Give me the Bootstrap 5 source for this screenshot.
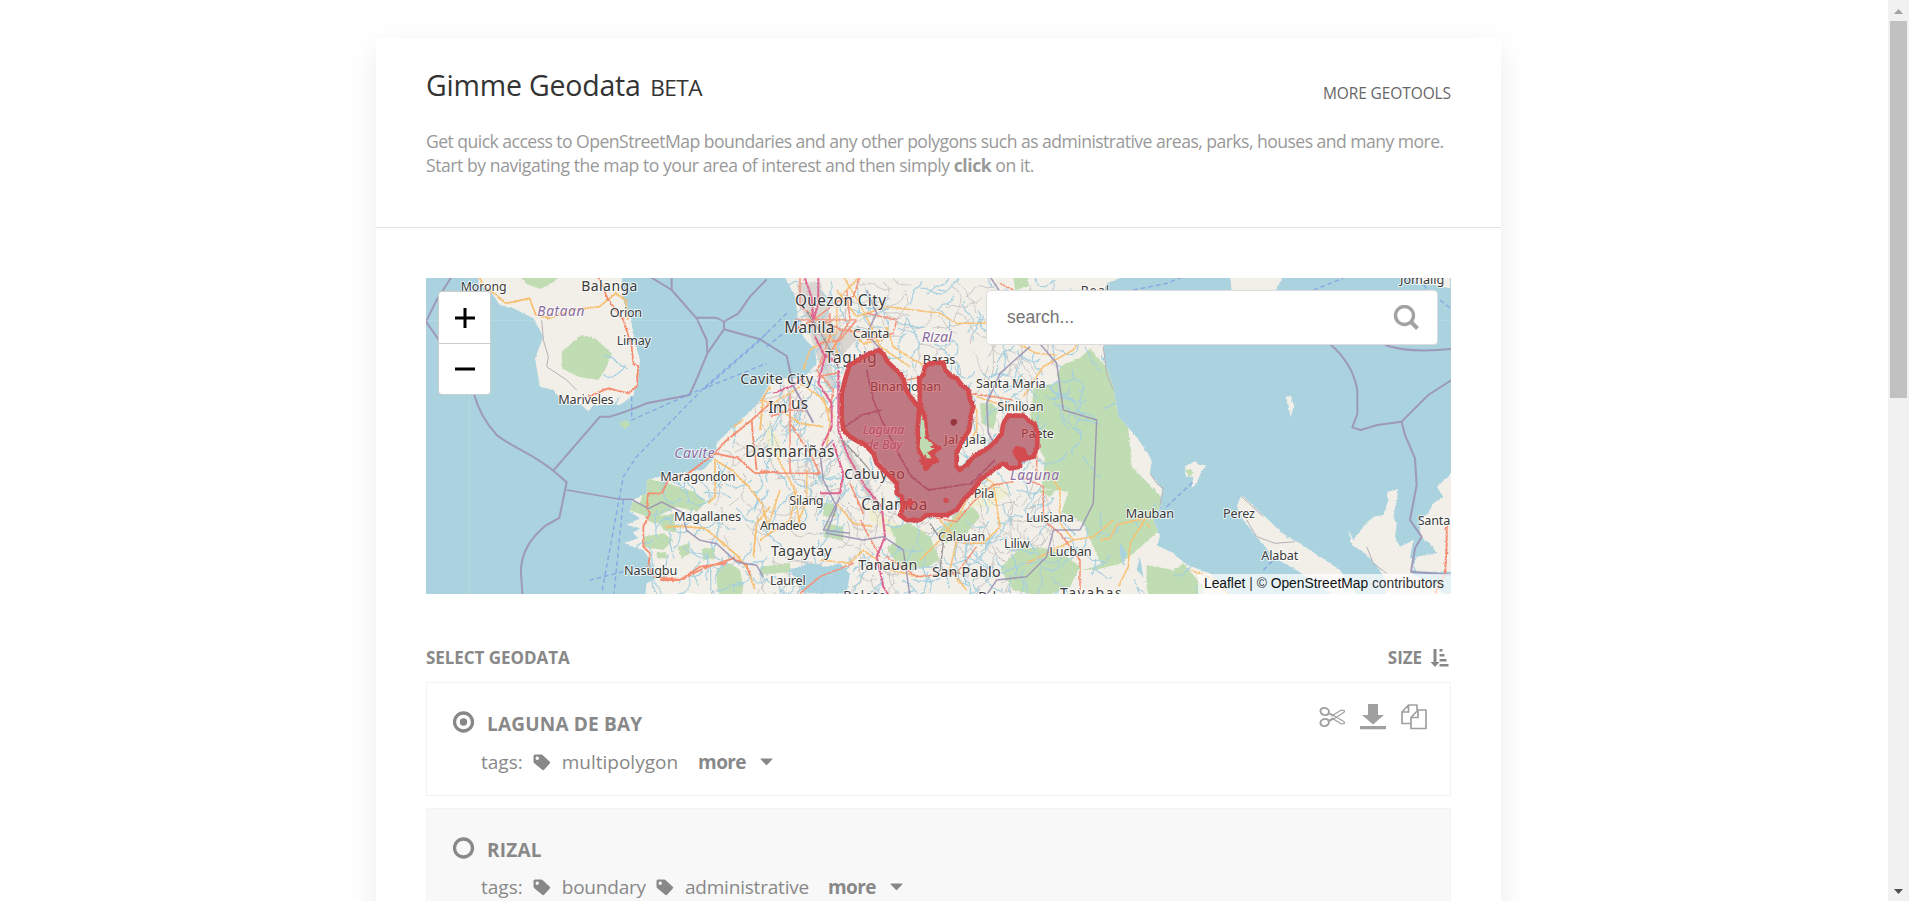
<!DOCTYPE html>
<html lang="en">
<head>
<meta charset="utf-8">
<title>Gimme Geodata</title>
<link href="https://cdn.jsdelivr.net/npm/bootstrap@5.3.0/dist/css/bootstrap.min.css" rel="stylesheet">
<script src="https://cdn.jsdelivr.net/npm/bootstrap@5.3.0/dist/js/bootstrap.bundle.min.js"></script>
<style>
body{height:901px;overflow:hidden;background:#fff;font-family:"Open Sans","Noto Sans",sans-serif;color:#888}
.page-col{height:901px;overflow:hidden;padding:38px 387px 0 376px}
.sheet{width:1125px;height:1000px;background:#fff;box-shadow:0 10px 30px rgba(0,0,0,.08)}
.head{height:190px;padding:0 50px;border-bottom:1px solid #e0e2e3}
.title{color:#333;font-size:28.5px;line-height:40px;padding-top:27px;font-weight:400;letter-spacing:-.2px}
.title .beta{font-size:22.6px;margin-left:9.500px;letter-spacing:-.5px}
.tools{color:#666;font-size:15.5px;line-height:20px;padding-top:45px;letter-spacing:-.1px}
.intro{color:#999;font-size:17.6px;line-height:24.300px;margin-top:21px;white-space:nowrap;letter-spacing:-.545px}
.intro .second{letter-spacing:-.45px}
.main-pad{padding:0 50px}
.map{height:316px;margin-top:50px;background:#aad3df}
.map>svg{display:block}
.zoomer{left:12px;top:13px;width:53px;height:104px;border:1px solid #ccc;border-radius:4px;background:#fff}
.zoomer div{height:51px}
.zoomer div+div{border-top:1px solid #ccc}
.finder{left:560px;top:12px;width:452px;height:55px;background:#fff;border:1px solid #dcdcdc;border-radius:4px;font:17.500px "Liberation Sans",sans-serif;color:#757575;padding:0 18px 0 20px}
.attrib{right:0;bottom:0;height:20px;background:rgba(255,255,255,.7);font:13.8px/19px "Liberation Sans",sans-serif;color:#333;padding:0 7px 0 6px;white-space:nowrap}
.attrib b{font-weight:400;color:#111}
.bar{height:24px;margin-top:52px;font-size:17px;font-weight:700;line-height:24px;letter-spacing:-.05px}
.geo{height:114px;border:1px solid #f3f3f3;background:#fff;margin-bottom:12px;padding:28px 23px 0 26px}
.bar+.geo{margin-top:12px}
.geo.off{background:#f8f8f8}
.geo h2{font-size:19px;font-weight:700;line-height:26px;margin:0 0 0 12px;letter-spacing:.2px}
.tags{font-size:19px;line-height:26px;margin:12px 0 0 28px}
.off .tags{margin-top:11px}
.tags b{font-weight:700;letter-spacing:-.6px}
.tight{letter-spacing:-.2px}
svg{flex:none}
.acts{margin-top:-7px}
.sb{right:0;top:0;width:21px;height:901px;background:#f1f1f1}
.sb i{display:block;width:17px;height:377px;background:#c1c1c1;margin:0 auto}
.place{font-family:"Noto Sans","Open Sans",sans-serif;fill:#3a3a3a;stroke:#fff;stroke-opacity:.75;stroke-width:6px;paint-order:stroke;stroke-linejoin:round}
.place .prov{fill:#8a6a9c;font-style:italic}
</style>
</head>
<body>
<svg width="0" height="0" class="position-absolute">
<symbol id="tag" viewBox="0 0 18 17"><path fill="#888" fill-rule="evenodd" d="M.5 2Q.5.5 2 .5h6.2q.9 0 1.6.7l7 6.5q.9.9 0 1.8l-5.700 6.300q-.9.9-1.900 0L1.300 9.300Q.5 8.500.5 7.600ZM4.200 2.500a1.700 1.700 0 1 0 .1 0Z"/></symbol>
<symbol id="caret" viewBox="0 0 13 8"><path fill="#888" d="M1 .5h11q.8.300.2 1L7.200 6.700q-.7.600-1.400 0L.8 1.500Q.2.800 1 .5Z"/></symbol>
</svg>
<div class="page-col">
<main class="sheet">
<header class="head">
<div class="d-flex justify-content-between"><h1 class="title m-0"><span>Gimme Geodata</span><span class="beta">BETA</span></h1><div class="tools">MORE GEOTOOLS</div></div>
<p class="intro mb-0">Get quick access to OpenStreetMap boundaries and any other polygons such as administrative areas, parks, houses and many more.<br><span class="second">Start by navigating the map to your area of interest and then simply <b>click</b> on it.</span></p>
</header>
<div class="main-pad">
<div class="map position-relative">
<svg width="1025" height="316" viewBox="426 278 1025 316">
<defs>
<filter id="rough" x="-5%" y="-5%" width="110%" height="110%"><feTurbulence type="fractalNoise" baseFrequency=".11" numOctaves="3" seed="4"/><feDisplacementMap in="SourceGraphic" scale="8" xChannelSelector="R" yChannelSelector="G"/></filter>
<filter id="edge" x="-5%" y="-5%" width="110%" height="110%"><feTurbulence type="fractalNoise" baseFrequency=".13" numOctaves="2" seed="9"/><feDisplacementMap in="SourceGraphic" scale="8" xChannelSelector="R" yChannelSelector="G"/></filter>
<clipPath id="land"><path d="M175 20V42L215 70 240 105 280 115 340 145 370 200 345 265 360 350 400 360 430 395 480 400 505 425 520 405 600 405 640 375 655 330 660 270 645 220 635 160 610 90 605 20ZM1095 20L1125 80 1135 150 1150 200 1185 240 1190 280 1150 325 1080 325 1050 340 1020 390 985 430 940 470 890 520 885 560 850 600 800 605 740 615 680 630 680 670 640 690 630 725 660 745 620 765 660 775 640 790 655 805 610 820 670 840 690 870 700 900 720 920 680 940 675 980H2430L2370 910 2300 885 2260 850 2210 825 2220 800 2200 750 2220 710 2228 660 2190 610 2195 570 2150 500 2095 440 2080 350 2055 280 2050 220 2020 150 2060 40 2110 20Z"/></clipPath>
</defs>
<g transform="translate(420 270) scale(.33333)">
<g filter="url(#rough)">
<g clip-path="url(#land)"><path fill="#f2efe9" d="M0 0h3200v1000H0z"/>
<path fill="#d9d5d1" d="M1130 40l70-5 30 100 20 80-20 60 20 80-30 0-60-200-20-60ZM1230 190l60-20 20 40-60 60ZM1250 500l40 40 60 100 30 90-40-50-60-110Z"/>
<path fill="#f0eed0" d="M1340 700l80 60 90 20 30 40-100-10-90-60ZM1660 650l80-10 30 30-60 40-60 0ZM1040 450l40 60 0 60-40-30Z"/>
<g id="lanes" fill="none" stroke="#c4c0c0" stroke-width="2.500"></g>
<g fill="#c0dcb3">
<path d="M300 20l20 22 40 15 40-20 20-17ZM425 245l60-50 40 10 50 45-20 50-20 30-60-10-50-25ZM680 625l80 20 60 20 40 30-30 30-60-15-50 25 20 30-50-10-20-20-60-20-10-30 60 15ZM670 800l60-10 30 20-30 30-60-10ZM775 830l30-10 5 30-25 15ZM845 835l40 0 0 30-35 5ZM890 900l40-20 30 20 10 50-10 30h-60l-10-40ZM710 850l30-5 0 20-30 0ZM710 740l50-10 10 60-40-10Z"/>
<g transform="translate(1020 0)"><path d="M760 20l5 40 40-10 0-30ZM660 400l35 0 20 20-15 60-35-20ZM990 235l-30 30-55 20-15 30 10 20-80 20-5 70-10 60 50 80-10 90 80 10-20 60 60 30 60 130-60 15 40 0 80-20 80-70 60-50-20-80-90-90-20-230ZM390 770l60-10 60 40 30 70-40 20-80 5-40-60 30-20ZM530 790l60-60 50-20 20 30-40 50-60 30ZM720 895l60-60 80 0 60 25 40 30-30 60-80 30-90-20ZM200 760l50 10 0 40-60-10ZM0 890l90-10 0 25-90 10ZM830 660l60 0-20 20ZM190 700l30 0 10 40-40 0Z"/><path d="M1160 885l80 15 30-20 60 70v50h-160l-10-50Z"/></g>
</g>
<path fill="#aad3df" d="M1110 900l60-20 50 10 40-10 30 30-10 60H1150ZM2100 820l20 30-10 40-10-40ZM2160 860l10 60-20-20Z"/>
<g id="streams" fill="none" stroke="#a5d0df" stroke-width="3.500"></g>
</g>
<g transform="translate(2040 0)" fill="#f2efe9"><path d="M390 20l5 42h130l25-42ZM940 20l10 25 30-5 70 15V20ZM557 380l14-2 12 30-12 34-5-34ZM253 590l32-17 12 12 22 0-17 25-12 30-15 14 5-34-22 0ZM425 675l70 65 65 60 40 20 90 60 30 20 50 75h-70l-60-45-120-70-50-60-40-50-20-40ZM745 780l15 30 30-40 30-30 30-5 15-45-3-25 33-7-5 32-10 50 10 20-5 40 15 30 40-20-10 50 20 45 130 0v80H860l-10-68-30-42-30-30-35-20ZM1070 590l-25 30-35 30 20 30-30 20-15 30-25 20 0 50 30 20 20 30-60 10-15 50 130 80Z"/><path fill="#c0dcb3" d="M257 600l14-4 8 12-12 12Z"/></g>
<path fill="#c0dcb3" d="M597 460l18-10 15 12-15 16Z"/>
<g fill="none" stroke="#f6be6d" stroke-width="5"><path d="M178 20l10 25 40 30 30 25 70-15 20 50 40 10 70-25 80-10 50-40 30 20 5 60"/><path d="M885 570l50 30 50 50 40 50 20 70M885 570l0 110-20 20M735 770l60 0 60 5 60 50 40 35 30 40 20 60M1020 480l10-100 20-30M1000 860l10-100 40-50M940 470l30-20"/></g>
<g transform="translate(1020 0)" fill="none" stroke="#f8c173" stroke-width="4.500"><path d="M120 340l60 40 40 60M120 350l-80 50-40-10M230 60l60 80 90-30 80 10 80 10 50 30 100 0 60 50 80 40 60 5M380 170l20 60 60 40 50 20M250 20l60 100 50 110 90 60M130 300l20-60 80-50 0-100 70-70M1040 60l-40 90-60 90-90 50-60 90M650 380l60 20 80 20M1010 60l50 10M620 380l30 40 0 60-30 50M640 600l60 40 20 130-50 50-60 0M540 750l50 60-20 90 50 60M860 600l40 60 0 100 40 50 60-10 60-50M180 870l90 10 40-40 80 60 90 20 120-10M40 540l60 110 20 120M0 810l90-60 20-90M230 700l50 60 60 10"/><path d="M1020 810l30-5 20-40 60-15 30-10-50 80-5 70-30 60M1160 760l10 15M1290 900l80 30 40 50M60 420l60 40 70 10M190 380l20 80-10 70M60 660l-30 90-30 30M140 600l0 90-30 80M270 180l40 40 60-10M150 160l70 50 20 60M800 880l60-30 80-40M480 870l60-60 60-80 30-60"/></g>
<g fill="none" stroke="#f58d70" stroke-width="5.500"><path d="M535 20l30 70 45 60 25 80 5 50 15 10-5 60-25 20-60-15-60 25"/><path d="M1050 400l-55 50-80 65-30 35 70 15 50 45 70-5M995 450l5 60 10 90M885 550l-80 60-60 20-20 40-40 0-5 40 10 20-20 40 0 60 20 20-5 40 15 30 80 10 60-40 80-10M720 930h60l70-35 90-30 40 20 10 30"/></g>
<g transform="translate(1020 0)" fill="none" stroke="#f49378" stroke-width="4.500"><path d="M105 150l80 0 60 30 60 5M120 20l0 90 60 40 110 0M260 60l10 90-60 100-40 50M300 20l-20 60-40 10M320 130l90 20-10 40-80 20M90 370l0 90 60 90 30 60-120 0-60-10M30 440l60-20 40 0M170 300l50 60-10 60M560 330l60 40 80 10 60 10M820 480l10 70 0 80M780 620l70 30 0 100 50 40 60 80 0 90M530 745l60 10 50-60 60-50 60-10M380 860l90 60 120-10 60-80M300 750l60 110M120 970l60-50 100-40M270 640l40 90M440 330l40-8M760 60l-40-20M630 640l20 40M90 370l0 90 0 150M100 180l60-30 80-60M180 220l60-10 50-60M210 130l0 70-30 80M170 320l60-10"/></g>
<path fill="none" stroke="#f58d70" stroke-width="6" d="M3080 770v60l-5 80-30 60"/>
</g>
<g filter="url(#edge)" fill="none" stroke="#df6591" stroke-width="6"><path d="M1155 24l20 60 5 70M1195 20l0 80-20 70M1255 300v180l30 80 50 90 50 60 10 90-25 60 20 90 30 50M1205 245l50 40M1200 670l60 0 10-60-30-90M1060 370l60-25 30-20M1185 200l30 60-20 80 40 60 0 70-30 60"/><path d="M1160 125l40 60 40 70 15 40M1265 510l50 50 50 60M1530 760l40 60-10 80 60 10" stroke="#9a9593" stroke-width="4"/></g>
<g fill="none" stroke="#9b92b3" stroke-width="6" stroke-linejoin="round" stroke-opacity=".9"><path d="M95 20L50 90 18 155 60 215M162 372Q180 440 230 495C280 535 330 545 400 602L540 440 570 440Q620 425 680 400L808 375Q830 330 862 250L912 178 912 155 955 130 990 80 1040 28M690 20l65 40 75 85 30 65 2 40M755 60V20M830 143h58l24 12M912 178l108 30 80 50 20 90 60 110M400 602l40 35-22 107-40 22Q300 830 303 910l5 70"/><path stroke-width="4.500" d="M440 660l160 28 35 0 50 28 40-20 60 30 15 55 40 30 50 10 60 55 60 10 20 35M1240 510l-40 40 10 80 40 80-30 80 110 20 60-10 60 40 20 140M1290 790l-80-10 50-100M1340 60l30 70-30 60 60 70M1710 20l40 60 100 130 60 70 20 140 100 30-10 250-40 80-80 0-20 80-60 60-90 10-40 60M1830 230l-90 80-40 90 5 90 30 50"/><path d="M2730 222q70 60 82 140v70l-15 40 25 8 50-15 73-10 80-80 70-45M2895 225q70 25 200 12M2945 455l10 40 30 70 5 80-20 105 35 50-20 35-12 70 130 10"/></g>
<g fill="none" stroke="#7f9be6" stroke-opacity=".8" stroke-width="4" stroke-dasharray="14 9"><path d="M635 380l0 70 180-80 225-90M1040 190L850 355 650 560 610 620 582 770 545 970M1100 130l-90 90-160 140M610 690L582 970M610 905l-100 25M1040 230l100-80M2240 710l80-75M2530 900l40-40M2140 60l100-20 50-20M2680 60l90-35M3060 90l50 40M3000 24l30 50"/></g>
<path fill="none" stroke="#b6b0b5" stroke-width="3" d="M365 150l5 60 15 50-5 30 60 40 30 30M2050 230l10 80 20 50M2190 610l20 30 20 15-10 50M2465 680l65 60M2480 750l30 50 55 20 60-5M2840 830l20 50 40 30"/>
<path stroke="#fff" stroke-opacity=".25" stroke-width="2" d="M18 151h3100M148 24v950"/>
<g transform="translate(1020 0)" filter="url(#edge)"><path fill="#aad3df" d="M268 285L305 262 358 240 415 305 430 325 455 385 480 400 478 325 495 290 550 278 575 320 605 345 640 410 628 480 590 550 600 600 640 560 725 490 745 437 790 437 832 490 820 560 780 590 730 580 640 660 590 720 480 750 420 735 410 640 340 550 250 480 245 370Z"/><path fill="#c0dcb3" d="M484 420l12 20 4 65 24 20 20 10-35 20 20 15-31 30-14-50Z"/>
<path fill="none" stroke="#8f6a9a" stroke-width="5" d="M320 300l20 90 25 60 60 120 30 50 50 40 130-20 70-70M255 470l50-35 60-15"/></g>
<g class="place" font-size="38">
<g><text x="122" y="62" textLength="138" font-size="37">Morong</text><text x="484" y="63" textLength="168" font-size="42">Balanga</text><text class="prov" x="352" y="137" textLength="141" font-size="41">Bataan</text><text x="569" y="142" textLength="97">Orion</text><text x="590" y="226" textLength="103">Limay</text><text x="415" y="403" textLength="166">Mariveles</text><text x="961" y="342" textLength="218" font-size="43">Cavite City</text><text class="prov" x="763" y="565" textLength="121" font-size="42">Cavite</text><text x="721" y="632" textLength="226">Maragondon</text><text x="762" y="754" textLength="201">Magallanes</text><text x="612" y="914" textLength="160">Nasugbu</text><text x="975" y="560" textLength="268" font-size="46">Dasmariñas</text><text x="795" y="999" textLength="80">Tuy</text></g>
<g transform="translate(1020 0)"><text x="105" y="109" textLength="273" font-size="46">Quezon City</text><text x="73" y="189" textLength="150" font-size="46">Manila</text><text x="278" y="203" textLength="110">Cainta</text><text class="prov" x="485" y="217" textLength="91" font-size="43">Rizal</text><text x="195" y="278" textLength="155" font-size="46">Taguig</text><text x="488" y="281" textLength="98">Baras</text><text x="25" y="429" textLength="57" font-size="46">Im</text><text x="93" y="416" textLength="51" font-size="46">us</text><text x="330" y="363" textLength="213">Binangonan</text><text x="648" y="355" textLength="209">Santa Maria</text><text x="712" y="424" textLength="139">Siniloan</text><text x="783" y="503" textLength="99">Paete</text><text x="553" y="523" textLength="126">Jalajala</text><text class="prov" x="308" y="492" textLength="125">Laguna</text><text class="prov" x="317" y="537" textLength="110">de Bay</text><text x="253" y="627" textLength="181" font-size="42">Cabuyao</text><text class="prov" x="750" y="631" textLength="147" font-size="41">Laguna</text><text x="88" y="705" textLength="103">Silang</text><text x="641" y="685" textLength="62">Pila</text><text x="304" y="720" textLength="198" font-size="46">Calamba</text><text x="0" y="779" textLength="140">Amadeo</text><text x="798" y="756" textLength="144">Luisiana</text><text x="534" y="813" textLength="142">Calauan</text><text x="732" y="833" textLength="77">Liliw</text><text x="868" y="857" textLength="127">Lucban</text><text x="33" y="859" textLength="182" font-size="43">Tagaytay</text><text x="295" y="900" textLength="177" font-size="43">Tanauan</text><text x="516" y="922" textLength="206" font-size="43">San Pablo</text><text x="30" y="945" textLength="107">Laurel</text><text x="250" y="991" textLength="128">Balete</text><text x="655" y="993" textLength="115">Dolores</text><text x="900" y="983" textLength="185" font-size="42">Tayabas</text><text x="962" y="76" textLength="85">Real</text></g>
<g transform="translate(2040 0)"><text x="900" y="42" textLength="133">Jomalig</text><text x="77" y="744" textLength="145">Mauban</text><text x="369" y="744" textLength="96">Perez</text><text x="484" y="869" textLength="111">Alabat</text><text x="953" y="765" textLength="98">Santa</text></g>
</g>
<g transform="translate(1020 0)" filter="url(#edge)">
<path fill="#cb3d45" fill-opacity=".6" stroke="#d34b4f" stroke-width="14" stroke-linejoin="round" fill-rule="evenodd" d="M268 285L290 275 305 262 330 250 345 245 358 240 372 255 382 275 398 290 415 305 430 325 438 360 455 385 470 405 480 400 478 325 490 315 495 290 510 280 550 278 555 300 575 320 590 325 605 345 625 360 630 390 640 410 632 440 628 480 605 515 590 550 590 590 600 600 620 585 640 560 690 530 710 510 725 490 730 460 745 437 790 437 805 450 825 465 832 490 832 530 820 560 800 565 790 540 770 535 765 550 780 570 780 590 750 595 730 580 700 600 660 630 640 660 610 690 590 720 560 735 500 735 480 750 440 750 420 735 430 710 425 680 410 670 410 640 380 610 350 580 340 550 310 520 295 515 270 500 250 480 245 440 245 370 255 330ZM479 400L473 480 478 545 492 560 485 570 498 598 512 578 530 572 512 550 538 535 516 523 500 510 494 440Z"/>
<path fill="#c0dcb3" d="M484 450l8 0 5 55 24 20-22 8-6 28-14-28Z"/>
<path fill="#d34b4f" d="M445 685l18 10-12 20-20-8ZM490 565l40 0-30 34ZM765 535l30 12 0 30-25-10Z"/><circle cx="582" cy="457" r="10" fill="#97343c"/><circle cx="558" cy="691" r="8" fill="#d34b4f"/>
</g>
</g>
</svg>
<div class="zoomer position-absolute"><div class="d-flex align-items-center justify-content-center"><svg width="22" height="22"><path stroke="#000" stroke-width="3" d="M1 11h20M11 1v20"/></svg></div><div class="d-flex align-items-center justify-content-center"><svg width="22" height="22"><path stroke="#000" stroke-width="3" d="M1 11h20"/></svg></div></div>
<div class="finder position-absolute d-flex align-items-center justify-content-between"><span>search...</span><svg width="26" height="26" fill="none" stroke="#a2a2a2"><circle cx="11.500" cy="10.500" r="9" stroke-width="3.400"/><path stroke-width="4" d="M17.500 16.500l7 7"/></svg></div>
<div class="attrib position-absolute"><b>Leaflet</b> | © <b>OpenStreetMap</b> contributors</div>
</div>
<div class="bar d-flex justify-content-between"><span>SELECT GEODATA</span><span class="d-flex align-items-center"><span>SIZE</span><svg class="ms-2" width="21" height="20"><path fill="#888" d="M3.500 1h3v13h3L5 19 .5 14h3ZM9.500 1h3v2.500h-3Zm0 5h5v2.500h-5Zm0 5h7v2.500h-7Zm0 5h9v2.500h-9Z"/></svg></span></div>
<section class="geo d-flex justify-content-between align-items-start">
<div><div class="d-flex"><svg width="22" height="22"><circle cx="10.500" cy="11" r="9" fill="none" stroke="#888" stroke-width="3.300"/><circle cx="10.500" cy="11" r="3.700" fill="#888"/></svg><h2>LAGUNA DE BAY</h2></div>
<div class="tags d-flex align-items-center"><span>tags:</span><svg width="18" height="17" style="margin-left:10px;margin-right:11px"><use href="#tag"/></svg><span>multipolygon</span><b style="margin-left:20px">more</b><svg width="13" height="8" style="margin-left:14px"><use href="#caret"/></svg></div></div>
<div class="acts d-flex"><svg width="26" height="26" fill="none" stroke="#a0a0a0"><ellipse cx="5.700" cy="7.500" rx="4.300" ry="3.500" stroke-width="2" transform="rotate(18 5.700 7.500)"/><ellipse cx="5.700" cy="18.500" rx="4.300" ry="3.500" stroke-width="2" transform="rotate(-18 5.700 18.500)"/><path stroke-width="1.200" d="M9.500 9.500l4 2 8-5q2-1 4 .2 0 1.500-1.500 2.300L11 17M9.500 16.500l4-2 8 5q2 1 4-.2 0-1.500-1.500-2.300L11 9.500M12.500 13h1"/></svg><svg width="26" height="26" style="margin-left:15px"><path fill="#a0a0a0" d="M8 0h10v11h6L13 20.500 2 11h6ZM0 22h26v3.300H0Z"/></svg><svg width="26" height="26" style="margin-left:15px" fill="none" stroke="#a0a0a0" stroke-width="1.700" stroke-linejoin="round"><path d="M10 19.500H1V8L7.500 1H16v5M7.500 1v7H1M10 13.500L17 6h8v18.500H10ZM17 6v7.500h-7"/></svg></div>
</section>
<section class="geo off mb-0">
<div class="d-flex"><svg width="22" height="22"><circle cx="10.500" cy="11" r="9" fill="none" stroke="#888" stroke-width="3.300"/></svg><h2>RIZAL</h2></div>
<div class="tags d-flex align-items-center"><span>tags:</span><svg width="18" height="17" style="margin-left:10px;margin-right:11px"><use href="#tag"/></svg><span class="tight">boundary</span><svg width="18" height="17" style="margin-left:10px;margin-right:11px"><use href="#tag"/></svg><span class="tight">administrative</span><b style="margin-left:19px">more</b><svg width="13" height="8" style="margin-left:14px"><use href="#caret"/></svg></div>
</section>
</div>
</main>
</div>
<div class="sb position-fixed"><svg class="d-block" width="21" height="21"><path fill="#a3a3a3" d="M6 14h9l-4.500-5Z"/></svg><i></i><svg class="position-absolute bottom-0 start-0" width="21" height="21"><path fill="#505050" d="M6 9h9l-4.500 5Z"/></svg></div>
<script>
/* minor watercourses and lanes */
(function(){
  var s=7;function r(){s=(s*16807)%2147483647;return s/2147483647}
  function draw(id,n,steps,len,x0,x1){
    var d='';
    for(var i=0;i<n;i++){
      var x=x0+r()*(x1-x0),y=20+r()*960,a=.7+r()*1.6;d+='M'+x.toFixed(0)+' '+y.toFixed(0);
      for(var k=0;k<steps;k++){a+=(r()-.5)*1.7;d+='l'+(Math.cos(a)*len).toFixed(0)+' '+(Math.sin(a)*len).toFixed(0)}
    }
    document.getElementById(id).innerHTML+='<path d="'+d+'"/>';
  }
  draw('streams',420,5,17,680,2000);draw('streams',14,5,17,380,640);draw('streams',30,5,17,2000,2400);draw('lanes',260,6,20,900,1900);
})();
</script>
</body>
</html>
